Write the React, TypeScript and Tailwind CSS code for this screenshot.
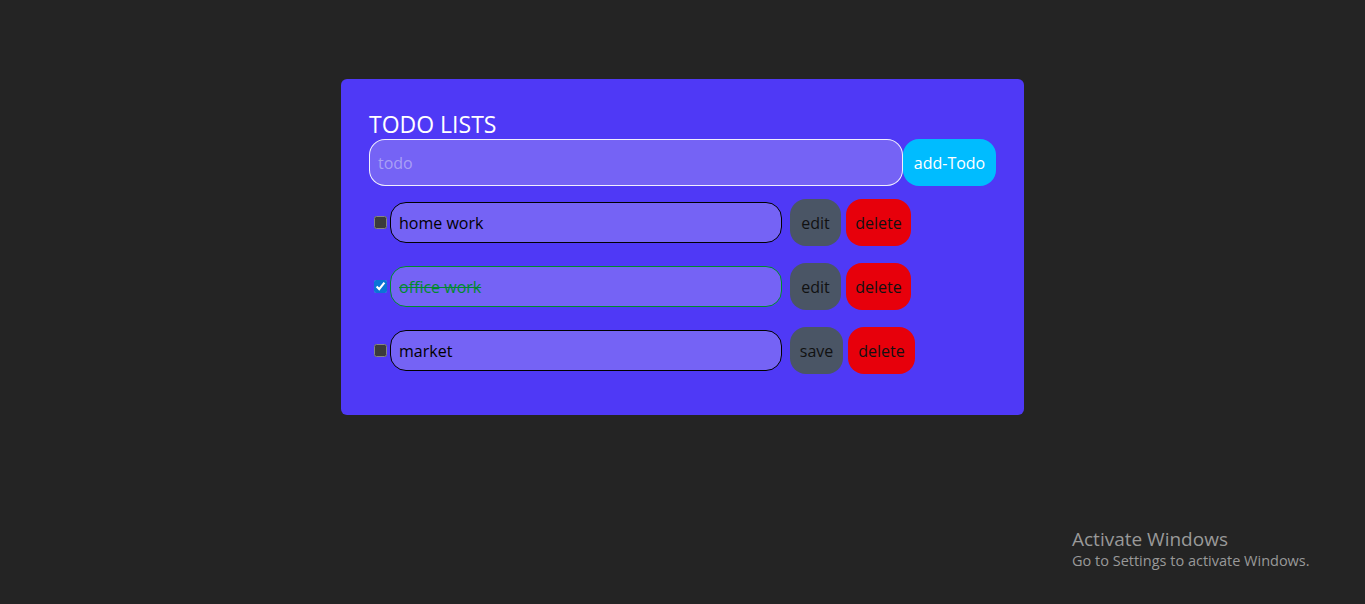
import React, { useState } from "react";

interface Todo {
   id: number;
   text: string;
   done: boolean;
   editing: boolean;
}

const initial: Todo[] = [
   { id: 1, text: "home work", done: false, editing: false },
   { id: 2, text: "office work", done: true, editing: false },
   { id: 3, text: "market", done: false, editing: true },
];

const App: React.FC = () => {
   const [todos, setTodos] = useState<Todo[]>(initial);
   const [value, setValue] = useState("");

   return (
      <div
         className="min-h-screen w-full bg-[#242424] relative"
         style={{ fontFamily: '"Open Sans", "Noto Sans", sans-serif' }}
      >
         <div className="flex justify-center pt-[79px]">
            <div className="w-[683px] h-[336px] bg-[#4f39f6] rounded-md px-7 pt-[29px]">
               <h1 className="text-[23px] leading-8 text-white">TODO LISTS</h1>
               <div className="flex mt-[-1px]">
                  <input
                     className="flex-1 h-[47px] bg-[#7563f5] border border-white/90 rounded-2xl pl-2 text-[16px] text-white placeholder:text-[#a99ff5] outline-none"
                     placeholder="todo"
                     value={value}
                     onChange={(e) => setValue(e.target.value)}
                  />
                  <button className="w-[93px] h-[47px] bg-[#00bcff] rounded-2xl text-white text-[16px]">
                     add-Todo
                  </button>
               </div>

               <div className="mt-[13px] flex flex-col gap-[17px]">
                  {todos.map((todo) => (
                     <div className="flex items-center" key={todo.id}>
                        <input
                           type="checkbox"
                           className={`w-[13px] h-[13px] ml-[5px] mr-[3px] ${
                              todo.done ? "[color-scheme:light] accent-[#0b74d6]" : "[color-scheme:dark]"
                           }`}
                           checked={todo.done}
                           onChange={() =>
                              setTodos(
                                 todos.map((t) => (t.id === todo.id ? { ...t, done: !t.done } : t))
                              )
                           }
                        />
                        <input
                           className={`w-[392px] h-[41px] bg-[#7563f5] rounded-2xl border px-2 text-[16px] outline-none ${
                              todo.done
                                 ? "border-[#008a2e] text-[#008a2e] line-through"
                                 : "border-black text-black"
                           }`}
                           value={todo.text}
                           readOnly={!todo.editing}
                           onChange={(e) =>
                              setTodos(
                                 todos.map((t) => (t.id === todo.id ? { ...t, text: e.target.value } : t))
                              )
                           }
                        />
                        <button
                           className={`ml-2 h-[47px] bg-[#4a5565] rounded-2xl text-[16px] text-[#111] ${
                              todo.editing ? "w-[53px]" : "w-[51px]"
                           }`}
                        >
                           {todo.editing ? "save" : "edit"}
                        </button>
                        <button
                           className={`ml-[5px] h-[47px] bg-[#e7000b] rounded-2xl text-[16px] text-[#111] ${
                              todo.editing ? "w-[67px]" : "w-[65px]"
                           }`}
                        >
                           delete
                        </button>
                     </div>
                  ))}
               </div>
            </div>
         </div>

         <div className="absolute left-[1072px] top-[527px] text-[#999999]">
            <p className="text-[19px] leading-6">Activate Windows</p>
            <p className="text-[14.5px] leading-5">Go to Settings to activate Windows.</p>
         </div>
      </div>
   );
};

export default App;
